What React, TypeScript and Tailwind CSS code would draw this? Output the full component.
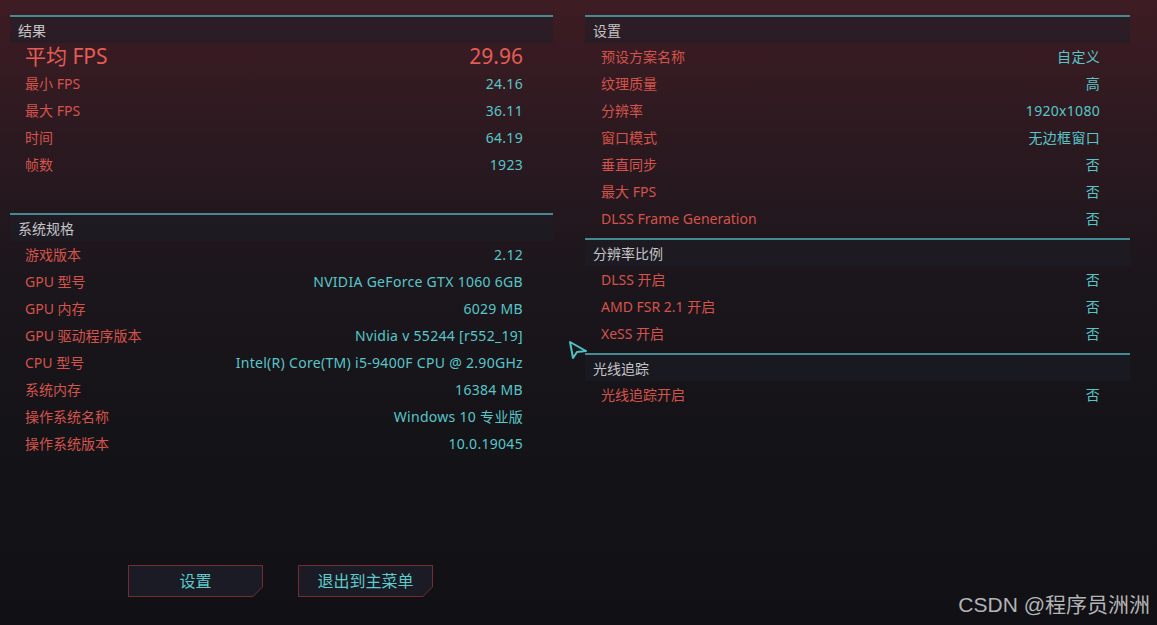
import React from "react";

const FONT = { fontFamily: '"Noto Sans", "Noto Sans CJK SC", sans-serif' };

type Row = [string, string];

function Header({ title }: { title: string }) {
  return (
    <div>
      <div className="h-[2px] bg-[#468a91]" />
      <div className="h-[26px] bg-[#1c1d27]/50 flex items-center pl-[8px] text-[14px] text-[#c4c4c6]">
        {title}
      </div>
    </div>
  );
}

function Rows({ rows, pl = "pl-[15px]" }: { rows: Row[]; pl?: string }) {
  return (
    <div className={`${pl} pr-[30px]`}>
      {rows.map(([k, v]) => (
        <div key={k} className="h-[27px] flex items-center justify-between text-[14px]">
          <span className="text-[#d4534b]">{k}</span>
          <span className="text-[#58c6c8] tracking-[0.3px]">{v}</span>
        </div>
      ))}
    </div>
  );
}

function Button({ label }: { label: string }) {
  return (
    <div className="w-[135px] h-[32px] bg-[#722c32] p-[1px] [clip-path:polygon(0_0,100%_0,100%_calc(100%_-_10px),calc(100%_-_10px)_100%,0_100%)]">
      <div className="w-full h-full bg-[#1a1b24] flex items-center justify-center text-[16px] text-[#5ccbcc] [clip-path:polygon(0_0,100%_0,100%_calc(100%_-_9px),calc(100%_-_9px)_100%,0_100%)]">
        {label}
      </div>
    </div>
  );
}

export default function App() {
  return (
    <div
      style={FONT}
      className="relative w-full h-[625px] overflow-hidden bg-[linear-gradient(180deg,#3e1c23_0%,#2c1920_22%,#1b161c_45%,#141318_70%,#111115_100%)]"
    >
      <div className="flex gap-[32px] px-[10px] h-full">
        {/* Left column */}
        <div className="w-[543px] flex flex-col pt-[15px]">
          <Header title="结果" />
          <div className="pl-[15px] pr-[30px]">
            <div className="h-[27px] flex items-center justify-between text-[21px] text-[#e35d55]">
              <span>平均 FPS</span>
              <span className="text-[21px]">29.96</span>
            </div>
          </div>
          <Rows
            rows={[
              ["最小 FPS", "24.16"],
              ["最大 FPS", "36.11"],
              ["时间", "64.19"],
              ["帧数", "1923"],
            ]}
          />
          <div className="h-[35px]" />
          <Header title="系统规格" />
          <Rows
            rows={[
              ["游戏版本", "2.12"],
              ["GPU 型号", "NVIDIA GeForce GTX 1060 6GB"],
              ["GPU 内存", "6029 MB"],
              ["GPU 驱动程序版本", "Nvidia v 55244 [r552_19]"],
              ["CPU 型号", "Intel(R) Core(TM) i5-9400F CPU @ 2.90GHz"],
              ["系统内存", "16384 MB"],
              ["操作系统名称", "Windows 10 专业版"],
              ["操作系统版本", "10.0.19045"],
            ]}
          />
          <div className="mt-auto mb-[28px] flex gap-[35px] pl-[118px]">
            <Button label="设置" />
            <Button label="退出到主菜单" />
          </div>
        </div>

        {/* Right column */}
        <div className="w-[545px] flex flex-col pt-[15px]">
          <Header title="设置" />
          <Rows
            pl="pl-[16px]"
            rows={[
              ["预设方案名称", "自定义"],
              ["纹理质量", "高"],
              ["分辨率", "1920x1080"],
              ["窗口模式", "无边框窗口"],
              ["垂直同步", "否"],
              ["最大 FPS", "否"],
              ["DLSS Frame Generation", "否"],
            ]}
          />
          <div className="h-[6px]" />
          <Header title="分辨率比例" />
          <Rows
            pl="pl-[16px]"
            rows={[
              ["DLSS 开启", "否"],
              ["AMD FSR 2.1 开启", "否"],
              ["XeSS 开启", "否"],
            ]}
          />
          <div className="h-[6px]" />
          <Header title="光线追踪" />
          <Rows pl="pl-[16px]" rows={[["光线追踪开启", "否"]]} />
        </div>
      </div>

      {/* cursor */}
      <svg
        className="absolute left-[567px] top-[339px]"
        width="22"
        height="22"
        viewBox="0 0 22 22"
        fill="none"
      >
        <path d="M3 3 L19 12 L10 13 L6 19 Z" stroke="#4fc3c6" strokeWidth="2" strokeLinejoin="round" />
      </svg>

      {/* watermark */}
      <div
        className="absolute right-[7px] bottom-[5px] text-[21px] text-[#b4b4b6]"
        style={{ fontFamily: '"Liberation Sans", "Noto Sans CJK SC", sans-serif' }}
      >
        CSDN @程序员洲洲
      </div>
    </div>
  );
}
